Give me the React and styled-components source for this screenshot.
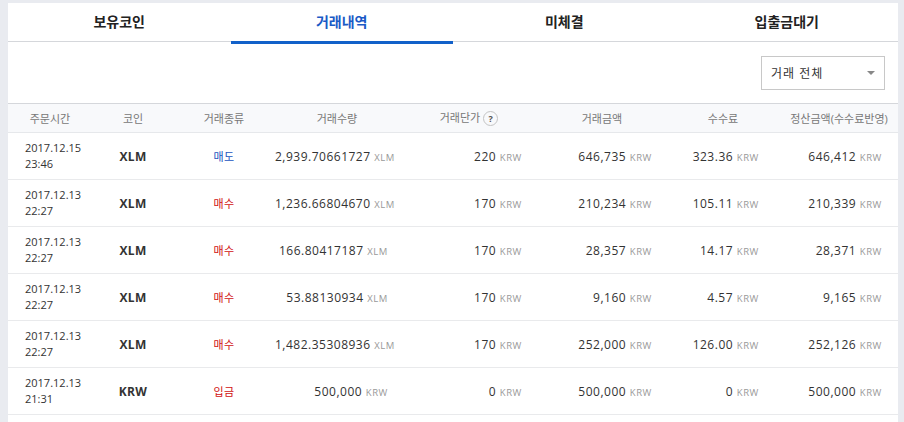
import styled, { createGlobalStyle } from 'styled-components'

const GlobalStyle = createGlobalStyle`
  html, body {
    margin: 0;
    padding: 0;
    background: #e9ebf0;
    font-family: "Open Sans", "Noto Sans CJK KR", sans-serif;
    color: #333;
  }
`

const columns = [
  { label: '주문시간', width: 84 },
  { label: '코인', width: 82 },
  { label: '거래종류', width: 100 },
  { label: '거래수량', width: 126 },
  { label: '거래단가', width: 138, help: true },
  { label: '거래금액', width: 128 },
  { label: '수수료', width: 114 },
  { label: '정산금액(수수료반영)', width: 118 },
]

const pads = [12, 16, 14, 21, 16]

const rows = [
  { date: '2017.12.15', time: '23:46', coin: 'XLM', type: '매도', sell: true, qty: '2,939.70661727', unit: 'XLM', price: '220', amount: '646,735', fee: '323.36', total: '646,412' },
  { date: '2017.12.13', time: '22:27', coin: 'XLM', type: '매수', qty: '1,236.66804670', unit: 'XLM', price: '170', amount: '210,234', fee: '105.11', total: '210,339' },
  { date: '2017.12.13', time: '22:27', coin: 'XLM', type: '매수', qty: '166.80417187', unit: 'XLM', price: '170', amount: '28,357', fee: '14.17', total: '28,371' },
  { date: '2017.12.13', time: '22:27', coin: 'XLM', type: '매수', qty: '53.88130934', unit: 'XLM', price: '170', amount: '9,160', fee: '4.57', total: '9,165' },
  { date: '2017.12.13', time: '22:27', coin: 'XLM', type: '매수', qty: '1,482.35308936', unit: 'XLM', price: '170', amount: '252,000', fee: '126.00', total: '252,126' },
  { date: '2017.12.13', time: '21:31', coin: 'KRW', type: '입금', qty: '500,000', unit: 'KRW', price: '0', amount: '500,000', fee: '0', total: '500,000' },
]

const tabs = ['보유코인', '거래내역', '미체결', '입출금대기']

const App = () => {
  return <Panel>
    <GlobalStyle />
    <Tabs>
      {tabs.map((t, i) => <Tab key={t} $active={i === 1}>{t}</Tab>)}
    </Tabs>
    <FilterBar>
      <Select>
        <span>거래 전체</span>
        <Caret />
      </Select>
    </FilterBar>
    <Table>
      <colgroup>
        {columns.map(c => <col key={c.label} style={{ width: c.width }} />)}
      </colgroup>
      <thead>
        <tr>
          {columns.map(c => <Th key={c.label}>
            {c.label}
            {c.help && <Help>?</Help>}
          </Th>)}
        </tr>
      </thead>
      <tbody>
        {rows.map((r, i) => <Row key={i}>
          <DateCell>{r.date}<br />{r.time}</DateCell>
          <CoinCell>{r.coin}</CoinCell>
          <TypeCell $sell={r.sell}>{r.type}</TypeCell>
          <NumCell $pad={pads[0]}>{r.qty} <Unit>{r.unit}</Unit></NumCell>
          <NumCell $pad={pads[1]}>{r.price} <Unit>KRW</Unit></NumCell>
          <NumCell $pad={pads[2]}>{r.amount} <Unit>KRW</Unit></NumCell>
          <NumCell $pad={pads[3]}>{r.fee} <Unit>KRW</Unit></NumCell>
          <NumCell $pad={pads[4]}>{r.total} <Unit>KRW</Unit></NumCell>
        </Row>)}
      </tbody>
    </Table>
  </Panel>
}

const Panel = styled.div`
  margin: 3px 6px 0 8px;
  background: #fff;
  min-height: 419px;
`

const Tabs = styled.div`
  display: flex;
  height: 38px;
  border-bottom: 1px solid #d5d7db;
`

const Tab = styled.div`
  flex: 1;
  display: flex;
  align-items: center;
  justify-content: center;
  padding-bottom: 3px;
  margin-bottom: -1px;
  font-size: 14px;
  font-weight: 700;
  color: ${p => p.$active ? '#1a5ac6' : '#222'};
  border-bottom: 3px solid ${p => p.$active ? '#1261c9' : 'transparent'};
  box-sizing: border-box;
  height: 41px;
`

const FilterBar = styled.div`
  display: flex;
  justify-content: flex-end;
  padding: 14px 13px 13px 0;
  border-bottom: 1px solid #d5d7db;
`

const Select = styled.div`
  width: 124px;
  height: 34px;
  box-sizing: border-box;
  border: 1px solid #c8c8c8;
  display: flex;
  align-items: center;
  justify-content: space-between;
  padding: 0 9px 0 9px;
  font-size: 12px;
  letter-spacing: 1px;
  color: #333;
`

const Caret = styled.span`
  width: 0;
  height: 0;
  border-left: 4px solid transparent;
  border-right: 4px solid transparent;
  border-top: 4px solid #888;
`

const Table = styled.table`
  width: 100%;
  border-collapse: collapse;
  table-layout: fixed;
`

const Th = styled.th`
  height: 28px;
  padding: 0;
  background: #f8f9fb;
  border-bottom: 1px solid #e6e8eb;
  font-size: 11px;
  font-weight: 400;
  color: #777;
  text-align: center;
  white-space: nowrap;
  vertical-align: middle;
`

const Help = styled.span`
  display: inline-flex;
  align-items: center;
  justify-content: center;
  width: 13px;
  height: 13px;
  margin-left: 3px;
  border: 1px solid #c4c4c4;
  border-radius: 50%;
  font-size: 9px;
  font-weight: 700;
  color: #555;
  vertical-align: middle;
  position: relative;
  top: -1px;
`

const Row = styled.tr`
  height: 47px;
  border-bottom: 1px solid #e9eaec;
`

const DateCell = styled.td`
  padding: 0 0 1px 17px;
  font-size: 11px;
  line-height: 16px;
  color: #333;
`

const CoinCell = styled.td`
  text-align: center;
  font-size: 12px;
  font-weight: 700;
  color: #333;
  letter-spacing: 0.3px;
`

const TypeCell = styled.td`
  text-align: center;
  font-size: 11px;
  letter-spacing: 0.5px;
  color: ${p => p.$sell ? '#1a55c0' : '#d11010'};
`

const NumCell = styled.td`
  text-align: right;
  padding-right: ${p => p.$pad}px;
  font-size: 12px;
  letter-spacing: 0.5px;
  color: #333;
  white-space: nowrap;
`

const Unit = styled.span`
  font-size: 9.5px;
  color: #999;
  letter-spacing: 0.6px;
`

export default App
